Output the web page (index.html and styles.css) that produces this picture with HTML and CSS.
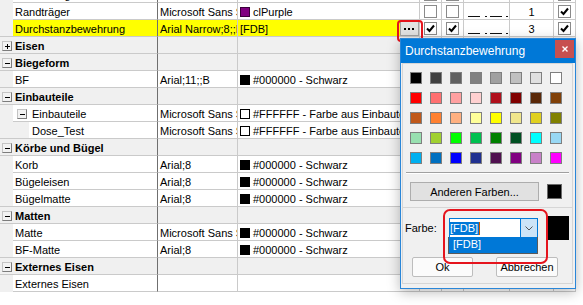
FILE: index.html
```html
<!DOCTYPE html>
<html lang="de">
<head>
<meta charset="utf-8">
<title>Durchstanzbewehrung</title>
<link rel="stylesheet" href="styles.css">
</head>
<body>
<div class="grid">
  <div class="row">
    <div class="c g"></div>
    <div class="c c1">Stützenbügel</div>
    <div class="c c2"></div>
    <div class="c c3"><span class="sw sw-black"></span></div>
    <div class="c ck"><span class="cb"></span></div>
    <div class="c ck"><span class="cb"></span></div>
    <div class="c ls"><svg width="46" height="16" viewBox="0 0 46 16"><rect x="4" y="13" width="12" height="1" fill="#111"/><rect x="21" y="13" width="2" height="1" fill="#111"/><rect x="26" y="13" width="12" height="1" fill="#111"/><rect x="42" y="13" width="2" height="1" fill="#111"/></svg></div>
    <div class="c num"></div>
    <div class="c ck"><span class="cb"><svg width="11" height="11" viewBox="0 0 11 11"><path d="M2 5.5l2.5 2.5 4.5-5.5" fill="none" stroke="#000" stroke-width="2"/></svg></span></div>
  </div>
  <div class="row">
    <div class="c g"></div>
    <div class="c c1">Randträger</div>
    <div class="c c2">Microsoft Sans Serif;8</div>
    <div class="c c3"><span class="sw sw-purple"></span>clPurple</div>
    <div class="c ck"><span class="cb"></span></div>
    <div class="c ck"><span class="cb"></span></div>
    <div class="c ls"><svg width="46" height="16" viewBox="0 0 46 16"><rect x="4" y="13" width="12" height="1" fill="#111"/><rect x="21" y="13" width="2" height="1" fill="#111"/><rect x="26" y="13" width="12" height="1" fill="#111"/><rect x="42" y="13" width="2" height="1" fill="#111"/></svg></div>
    <div class="c num">1</div>
    <div class="c ck"><span class="cb"><svg width="11" height="11" viewBox="0 0 11 11"><path d="M2 5.5l2.5 2.5 4.5-5.5" fill="none" stroke="#000" stroke-width="2"/></svg></span></div>
  </div>
  <div class="row hl">
    <div class="c g"></div>
    <div class="c c1">Durchstanzbewehrung</div>
    <div class="c c2">Arial Narrow;8;;B</div>
    <div class="c c3 c3btn"><span class="val">[FDB]</span><span class="dots"><svg width="17" height="13" viewBox="0 0 17 13"><rect x="3" y="6" width="2" height="2" fill="#000"/><rect x="7" y="6" width="2" height="2" fill="#000"/><rect x="11" y="6" width="2" height="2" fill="#000"/></svg></span></div>
    <div class="c ck"><span class="cb"><svg width="11" height="11" viewBox="0 0 11 11"><path d="M2 5.5l2.5 2.5 4.5-5.5" fill="none" stroke="#000" stroke-width="2"/></svg></span></div>
    <div class="c ck"><span class="cb"><svg width="11" height="11" viewBox="0 0 11 11"><path d="M2 5.5l2.5 2.5 4.5-5.5" fill="none" stroke="#000" stroke-width="2"/></svg></span></div>
    <div class="c ls"><svg width="46" height="16" viewBox="0 0 46 16"><rect x="4" y="13" width="12" height="1" fill="#111"/><rect x="21" y="13" width="2" height="1" fill="#111"/><rect x="26" y="13" width="12" height="1" fill="#111"/><rect x="42" y="13" width="2" height="1" fill="#111"/></svg></div>
    <div class="c num">3</div>
    <div class="c ck"><span class="cb"><svg width="11" height="11" viewBox="0 0 11 11"><path d="M2 5.5l2.5 2.5 4.5-5.5" fill="none" stroke="#000" stroke-width="2"/></svg></span></div>
  </div>
  <div class="row grp">
    <div class="c g"><span class="xb"><svg width="8" height="8" viewBox="0 0 8 8"><rect x="2" y="4" width="5" height="1" fill="#000"/><rect x="4" y="2" width="1" height="5" fill="#000"/></svg></span></div>
    <div class="c c1">Eisen</div>
    <div class="c c2"></div><div class="c c3"></div><div class="c"></div><div class="c"></div><div class="c"></div><div class="c"></div><div class="c"></div>
  </div>
  <div class="row grp">
    <div class="c g"><span class="xb"><svg width="8" height="8" viewBox="0 0 8 8"><rect x="2" y="4" width="5" height="1" fill="#000"/></svg></span></div>
    <div class="c c1">Biegeform</div>
    <div class="c c2"></div><div class="c c3"></div><div class="c"></div><div class="c"></div><div class="c"></div><div class="c"></div><div class="c"></div>
  </div>
  <div class="row">
    <div class="c g"></div>
    <div class="c c1">BF</div>
    <div class="c c2">Arial;11;;B</div>
    <div class="c c3"><span class="sw sw-black"></span>#000000 - Schwarz</div>
    <div class="c"></div><div class="c"></div><div class="c"></div><div class="c"></div><div class="c"></div>
  </div>
  <div class="row grp">
    <div class="c g"><span class="xb"><svg width="8" height="8" viewBox="0 0 8 8"><rect x="2" y="4" width="5" height="1" fill="#000"/></svg></span></div>
    <div class="c c1">Einbauteile</div>
    <div class="c c2"></div><div class="c c3"></div><div class="c"></div><div class="c"></div><div class="c"></div><div class="c"></div><div class="c"></div>
  </div>
  <div class="row">
    <div class="c g"></div>
    <div class="c c1 sub"><span class="xb"><svg width="8" height="8" viewBox="0 0 8 8"><rect x="2" y="4" width="5" height="1" fill="#000"/></svg></span>Einbauteile</div>
    <div class="c c2">Microsoft Sans Serif;8</div>
    <div class="c c3"><span class="sw sw-white"></span>#FFFFFF - Farbe aus Einbauteile</div>
    <div class="c"></div><div class="c"></div><div class="c"></div><div class="c"></div><div class="c"></div>
  </div>
  <div class="row">
    <div class="c g"></div>
    <div class="c c1 ind">Dose_Test</div>
    <div class="c c2">Microsoft Sans Serif;8</div>
    <div class="c c3"><span class="sw sw-white"></span>#FFFFFF - Farbe aus Einbauteile</div>
    <div class="c"></div><div class="c"></div><div class="c"></div><div class="c"></div><div class="c"></div>
  </div>
  <div class="row grp">
    <div class="c g"><span class="xb"><svg width="8" height="8" viewBox="0 0 8 8"><rect x="2" y="4" width="5" height="1" fill="#000"/></svg></span></div>
    <div class="c c1">Körbe und Bügel</div>
    <div class="c c2"></div><div class="c c3"></div><div class="c"></div><div class="c"></div><div class="c"></div><div class="c"></div><div class="c"></div>
  </div>
  <div class="row">
    <div class="c g"></div>
    <div class="c c1">Korb</div>
    <div class="c c2">Arial;8</div>
    <div class="c c3"><span class="sw sw-black"></span>#000000 - Schwarz</div>
    <div class="c"></div><div class="c"></div><div class="c"></div><div class="c"></div><div class="c"></div>
  </div>
  <div class="row">
    <div class="c g"></div>
    <div class="c c1">Bügeleisen</div>
    <div class="c c2">Arial;8</div>
    <div class="c c3"><span class="sw sw-black"></span>#000000 - Schwarz</div>
    <div class="c"></div><div class="c"></div><div class="c"></div><div class="c"></div><div class="c"></div>
  </div>
  <div class="row">
    <div class="c g"></div>
    <div class="c c1">Bügelmatte</div>
    <div class="c c2">Arial;8</div>
    <div class="c c3"><span class="sw sw-black"></span>#000000 - Schwarz</div>
    <div class="c"></div><div class="c"></div><div class="c"></div><div class="c"></div><div class="c"></div>
  </div>
  <div class="row grp">
    <div class="c g"><span class="xb"><svg width="8" height="8" viewBox="0 0 8 8"><rect x="2" y="4" width="5" height="1" fill="#000"/></svg></span></div>
    <div class="c c1">Matten</div>
    <div class="c c2"></div><div class="c c3"></div><div class="c"></div><div class="c"></div><div class="c"></div><div class="c"></div><div class="c"></div>
  </div>
  <div class="row">
    <div class="c g"></div>
    <div class="c c1">Matte</div>
    <div class="c c2">Microsoft Sans Serif;8</div>
    <div class="c c3"><span class="sw sw-black"></span>#000000 - Schwarz</div>
    <div class="c"></div><div class="c"></div><div class="c"></div><div class="c"></div><div class="c"></div>
  </div>
  <div class="row">
    <div class="c g"></div>
    <div class="c c1">BF-Matte</div>
    <div class="c c2">Arial;8</div>
    <div class="c c3"><span class="sw sw-black"></span>#000000 - Schwarz</div>
    <div class="c"></div><div class="c"></div><div class="c"></div><div class="c"></div><div class="c"></div>
  </div>
  <div class="row grp">
    <div class="c g"><span class="xb"><svg width="8" height="8" viewBox="0 0 8 8"><rect x="2" y="4" width="5" height="1" fill="#000"/></svg></span></div>
    <div class="c c1">Externes Eisen</div>
    <div class="c c2"></div><div class="c c3"></div><div class="c"></div><div class="c"></div><div class="c"></div><div class="c"></div><div class="c"></div>
  </div>
  <div class="row">
    <div class="c g"></div>
    <div class="c c1">Externes Eisen</div>
    <div class="c c2"></div>
    <div class="c c3"></div>
    <div class="c"></div><div class="c"></div><div class="c"></div><div class="c"></div><div class="c"></div>
  </div>
</div>

<div class="mark mark-btn"></div>

<div class="dlg">
  <div class="tb">
    <span class="tt">Durchstanzbewehrung</span>
    <span class="close"><svg width="6" height="6" viewBox="0 0 6 6"><path d="M0.5 0.5l5 5M5.5 0.5l-5 5" stroke="#fff" stroke-width="1.4"/></svg></span>
  </div>
  <div class="dbody">
    <div class="pane pane-top">
      <div class="pal">
        <span class="ps" style="background:#000000"></span><span class="ps" style="background:#404040"></span><span class="ps" style="background:#606060"></span><span class="ps" style="background:#808080"></span><span class="ps" style="background:#a0a0a0"></span><span class="ps" style="background:#c0c0c0"></span><span class="ps" style="background:#e0e0e0"></span><span class="ps" style="background:#ffffff"></span>
        <span class="ps" style="background:#ff0000"></span><span class="ps" style="background:#ff7070"></span><span class="ps" style="background:#ffa0a0"></span><span class="ps" style="background:#ffd0d0"></span><span class="ps" style="background:#b0101c"></span><span class="ps" style="background:#800000"></span><span class="ps" style="background:#5a2808"></span><span class="ps" style="background:#804008"></span>
        <span class="ps" style="background:#c0581a"></span><span class="ps" style="background:#ff8030"></span><span class="ps" style="background:#ffb080"></span><span class="ps" style="background:#ffff99"></span><span class="ps" style="background:#ffff00"></span><span class="ps" style="background:#f0e68c"></span><span class="ps" style="background:#e0d020"></span><span class="ps" style="background:#808000"></span>
        <span class="ps" style="background:#98e0b0"></span><span class="ps" style="background:#a0d030"></span><span class="ps" style="background:#00ff00"></span><span class="ps" style="background:#00c050"></span><span class="ps" style="background:#008000"></span><span class="ps" style="background:#005022"></span><span class="ps" style="background:#00ffff"></span><span class="ps" style="background:#98d8f4"></span>
        <span class="ps" style="background:#00b0f0"></span><span class="ps" style="background:#0070c0"></span><span class="ps" style="background:#0000ff"></span><span class="ps" style="background:#203090"></span><span class="ps" style="background:#501050"></span><span class="ps" style="background:#800080"></span><span class="ps" style="background:#c880c8"></span><span class="ps" style="background:#ff00ff"></span>
      </div>
      <div class="sep"></div>
      <div class="more-row">
        <span class="btn more">Anderen Farben...</span>
        <span class="cur"></span>
      </div>
    </div>
    <div class="pane pane-bot">
      <div class="farbe-row">
        <span class="lbl">Farbe:</span>
        <span class="combo">
          <span class="ctext"><span class="sel">[FDB]</span><span class="caret"></span></span>
          <span class="carr"><svg width="8" height="5" viewBox="0 0 8 5"><path d="M0.5 0.5l3.5 3.5 3.5-3.5" fill="none" stroke="#555" stroke-width="1"/></svg></span>
        </span>
        <span class="big"></span>
      </div>
      <div class="dropl">[FDB]</div>
      <div class="btn-row">
        <span class="btn dbtn ok">Ok</span>
        <span class="btn dbtn cancel">Abbrechen</span>
      </div>
    </div>
  </div>
</div>

<div class="mark mark-combo"></div>
</body>
</html>
```

FILE: styles.css
```css
html, body {
  margin: 0;
  padding: 0;
}
body {
  width: 583px;
  height: 305px;
  overflow: hidden;
  background: #fff;
  font-family: "Liberation Sans", Arial, sans-serif;
  font-size: 11px;
  color: #000;
  position: relative;
}

/* ---------- tree grid ---------- */
.grid {
  margin-top: -14px;
  width: 576px;
}
.row {
  display: grid;
  grid-template-columns: 13px 145px 80px 182px 22px 22px 46px 44px 22px;
  height: 17px;
}
.c {
  box-sizing: border-box;
  height: 17px;
  border-bottom: 1px solid #cacaca;
  border-right: 1px solid #cacaca;
  background: #fff;
  line-height: 16px;
  padding-top: 1px;
  white-space: nowrap;
  overflow: hidden;
}
.g {
  background: #f0f0f0;
  border-right: none;
  border-bottom-color: #f0f0f0;
  padding: 4px 0 0 2px;
}
.row:has(+ .grp) .g,
.grp .g {
  border-bottom-color: #cacaca;
}
.c1 {
  border-right-color: #6f6f6f;
  padding-left: 2px;
}
.c2 {
  padding-left: 2px;
}
.c3 {
  padding-left: 2px;
}
.grp .c {
  background: #f0f0f0;
}
.grp .c1 {
  font-weight: bold;
}
.hl .c1, .hl .c2, .hl .c3 {
  background: #ffff00;
}
.sub {
  padding-left: 4px;
}
.sub .xb {
  display: inline-block;
  vertical-align: -1px;
  margin-right: 5px;
}
.ind {
  padding-left: 19px;
  background: linear-gradient(to right, #f0f0f0 16px, #fff 16px);
}
.num {
  text-align: center;
}
.ck {
  display: flex;
  align-items: center;
  justify-content: center;
  padding-top: 1px;
}
.ls {
  padding: 0;
}
.ls svg {
  display: block;
}

.sw {
  display: inline-block;
  box-sizing: border-box;
  width: 10px;
  height: 10px;
  margin-right: 3px;
  vertical-align: -1px;
}
.sw-black { background: #000; }
.sw-purple { background: #800080; border: 1px solid #3a003a; }
.sw-white { background: #fff; border: 1px solid #000; }

.cb {
  box-sizing: border-box;
  width: 13px;
  height: 13px;
  border: 1px solid #8a8a8a;
  background: #fff;
  display: block;
}
.cb svg {
  display: block;
}

.xb {
  box-sizing: border-box;
  display: block;
  width: 10px;
  height: 10px;
  border: 1px solid;
  border-color: #c4c4c4 #7c7c7c #7c7c7c #c4c4c4;
  background: #f2f2f2;
}
.xb svg {
  display: block;
}

.c3btn {
  display: flex;
  align-items: flex-start;
  padding-right: 0;
}
.c3btn .val {
  flex: 1;
}
.dots {
  box-sizing: border-box;
  width: 19px;
  height: 15px;
  background: #e2e2e2;
  border: 1px solid #a3a3a3;
  display: block;
}
.dots svg {
  display: block;
}

/* ---------- red highlight marks ---------- */
.mark {
  position: absolute;
  box-sizing: border-box;
  border: 2px solid #e5141d;
}
.mark-btn {
  left: 397px;
  top: 20px;
  width: 26px;
  height: 22px;
  border-radius: 4px;
}
.mark-combo {
  left: 443px;
  top: 209px;
  width: 105px;
  height: 55px;
  border-radius: 7px;
}

/* ---------- dialog ---------- */
.dlg {
  position: absolute;
  left: 400px;
  top: 38px;
  width: 176px;
  height: 251px;
  box-sizing: border-box;
  border: 1px solid #2a86d8;
  background: #f0f0f0;
  box-shadow: 0 3px 12px rgba(0, 0, 0, 0.28);
  display: flex;
  flex-direction: column;
  font-size: 11px;
}
.tb {
  height: 24px;
  flex: none;
  background: #0078d7;
  color: #fff;
  display: flex;
  justify-content: space-between;
  align-items: flex-start;
}
.tt {
  font-size: 12px;
  line-height: 24px;
  padding-left: 4px;
}
.close {
  width: 19px;
  height: 18px;
  margin: 1px 1px 0 0;
  background: #c75050;
  display: flex;
  align-items: center;
  justify-content: center;
}
.close svg {
  display: block;
}
.dbody {
  flex: 1;
  padding: 0 2px 4px 1px;
  display: flex;
  flex-direction: column;
}
.pane {
  border: 1px solid #d6d6d6;
}
.pane-top {
  padding: 8px 3px 6px 3px;
}
.pal {
  margin-left: 4px;
  display: grid;
  grid-template-columns: repeat(8, 12px);
  grid-auto-rows: 12px;
  gap: 8px;
}
.ps {
  box-sizing: border-box;
  border: 1px solid #7f7f7f;
  display: block;
}
.sep {
  margin-top: 8px;
  height: 0;
  border-top: 1px solid #a0a0a0;
  border-bottom: 1px solid #fff;
}
.more-row {
  margin-top: 8px;
  margin-left: 4px;
  display: flex;
  align-items: center;
  height: 19px;
}
.btn {
  box-sizing: border-box;
  display: flex;
  align-items: center;
  justify-content: center;
  color: #000;
}
.more {
  width: 129px;
  height: 19px;
  background: #e1e1e1;
  border: 1px solid #adadad;
}
.cur {
  box-sizing: border-box;
  width: 15px;
  height: 15px;
  margin-left: 8px;
  background: #000;
  border: 1px solid #6a6a6a;
}
.pane-bot {
  position: relative;
  border-top: none;
  flex: 1;
  padding: 0 0 0 2px;
}
.farbe-row {
  margin-top: 8px;
  height: 24px;
  display: flex;
  align-items: center;
}
.lbl {
  width: 44px;
}
.combo {
  box-sizing: border-box;
  width: 89px;
  height: 21px;
  border: 1px solid #0078d7;
  background: #fff;
  display: flex;
}
.ctext {
  flex: 1;
  display: flex;
  align-items: center;
}
.sel {
  background: #0078d7;
  color: #fff;
  height: 13px;
  line-height: 13px;
  padding: 0 1px 0 0;
}
.caret {
  width: 1px;
  height: 13px;
  background: #c85a00;
}
.carr {
  width: 16px;
  background: #cce4f7;
  border-left: 1px solid #0078d7;
  display: flex;
  align-items: center;
  justify-content: center;
}
.carr svg {
  display: block;
}
.dropl {
  position: absolute;
  left: 45px;
  top: 29px;
  box-sizing: border-box;
  width: 90px;
  height: 17px;
  background: #0078d7;
  color: #fff;
  line-height: 15px;
  padding-left: 4px;
  border: 1px solid #5a5a5a;
  border-top: none;
}
.big {
  width: 21px;
  height: 24px;
  margin-left: 10px;
  background: #000;
}
.btn-row {
  margin-top: 17px;
  padding-left: 7px;
  display: flex;
  gap: 23px;
}
.dbtn {
  height: 20px;
  background: #fbfbfb;
  border: 1px solid #bdbdbd;
  border-radius: 2px;
}
.ok {
  width: 61px;
}
.cancel {
  width: 62px;
}
```
